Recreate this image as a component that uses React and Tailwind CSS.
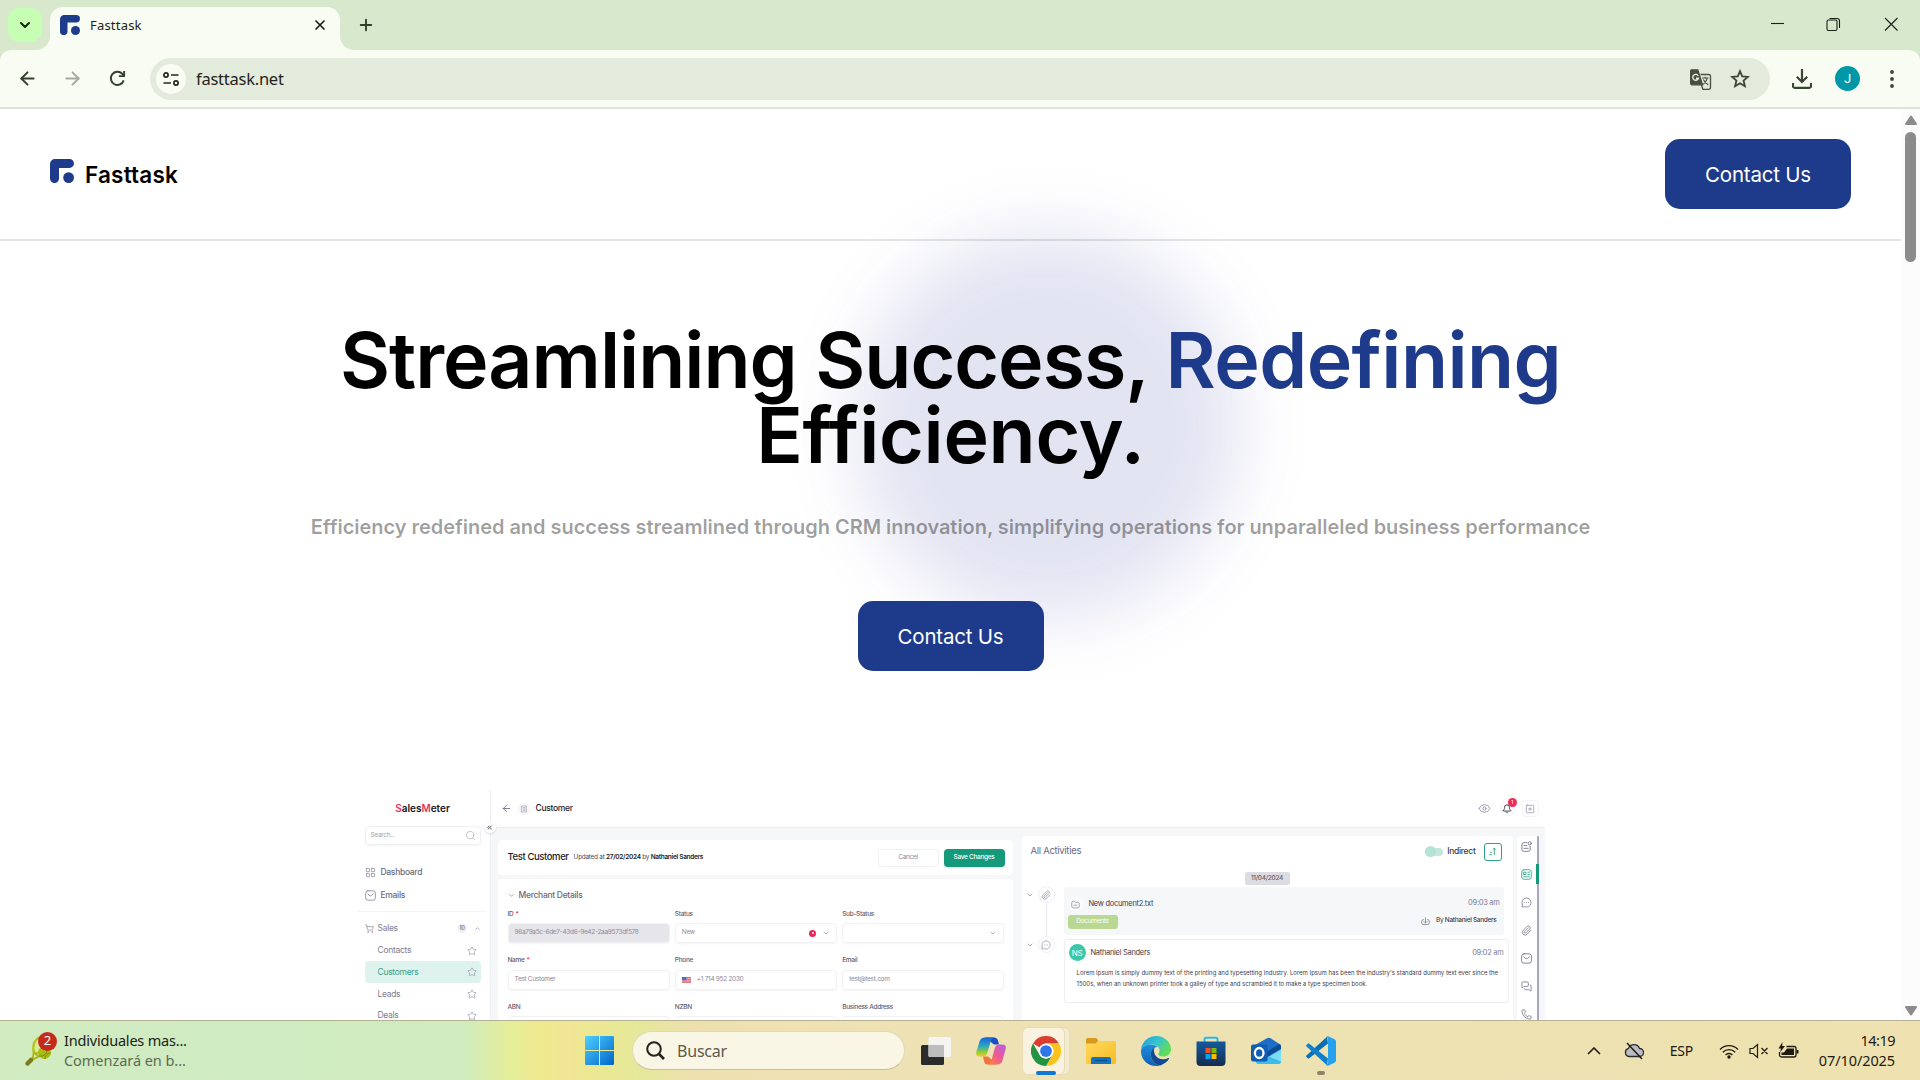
import React from "react";
import {
  ArrowLeft, ArrowRight, ChevronDown, ChevronUp, ChevronsLeft, Eye, Bell, SquarePlus, Star, LayoutGrid,
  ShoppingCart, Search, Paperclip, MessageCircleMore, Phone, MessagesSquare, X, Plus,
} from "lucide-react";

/* ---------- Browser chrome ---------- */

function FasttaskMark({ className }) {
  return (
    <svg viewBox="0 0 24 24" className={className} fill="#1e3a8a">
      <path d="M5 0H19.5A4.4 4.4 0 0 1 19.5 8.9H9V19.6A4.4 4.4 0 0 1 0 19.6V5A5 5 0 0 1 5 0Z" />
      <circle cx="18.6" cy="18.6" r="5.4" />
    </svg>
  );
}

function TabStrip() {
  return (
    <div className="flex h-[50px] shrink-0 bg-[#d8e8cd]">
      <div className="mt-2 ml-2 flex size-[34px] items-center justify-center rounded-xl bg-[#c6ffb4]">
        <ChevronDown className="size-[16px] text-[#16230f]" strokeWidth={3} />
      </div>
      <div className="relative mt-[7px] ml-2 flex h-[43px] w-[290px] items-center rounded-t-[13px] bg-[#f8fcf2] pr-[12px] pl-[10px]">
        <svg viewBox="0 0 14 14" className="absolute bottom-0 -left-[14px] size-[14px]" fill="#f8fcf2"><path d="M14 0V14H0A14 14 0 0 0 14 0Z" /></svg>
        <svg viewBox="0 0 14 14" className="absolute -right-[14px] bottom-0 size-[14px]" fill="#f8fcf2"><path d="M0 0V14H14A14 14 0 0 1 0 0Z" /></svg>
        <FasttaskMark className="mb-[7px] size-5" />
        <span className="mb-[5px] ml-[10px] text-[13px] tracking-[0.2px] text-[#1c1f1a]">Fasttask</span>
        <X className="mb-[7px] ml-auto size-[16px] text-[#1c1f1a]" strokeWidth={2.600} />
      </div>
      <Plus className="mt-[16px] ml-[17px] size-[18px] text-[#2f3d2c]" strokeWidth={2.500} />
      <svg viewBox="0 0 130 16" className="mt-[16px] mr-[22px] ml-auto h-4 w-[130px]" fill="none" stroke="#1a1f17" strokeWidth="1.1">
        <path d="M3 7.5H16" />
        <rect x="59" y="4" width="10" height="10.5" rx="1.5" />
        <path d="M61.500 2.500H69A2.500 2.500 0 0 1 71.500 5V12" />
        <path d="M117 2L129.500 14.500M129.500 2L117 14.500" />
      </svg>
    </div>
  );
}

function TranslateIcon() {
  return (
    <svg viewBox="0 0 22 22" className="size-[22px]" fill="none" stroke="#46513f" strokeWidth="1.300">
      <path d="M10.500 5.500H18.700A1.800 1.800 0 0 1 20.500 7.300V18.500A1.800 1.800 0 0 1 18.700 20.300H13L11.300 15.800" />
      <path d="M2 .8H7.800L12.500 15.800H2A1.400 1.400 0 0 1 .6 14.400V2.200A1.400 1.400 0 0 1 2 .8Z" fill="#46513f" />
      <path d="M8.200 6.900A2.900 2.900 0 1 0 8.400 9.200H6" stroke="#e8efe2" strokeWidth="1.400" />
      <path d="M12 9H18.500M15.200 7.700V9M17.300 9C16.600 12 15 14 12.600 15.600M13.400 10.500C14.300 13 16 14.700 18.300 15.700" strokeWidth="1.100" />
    </svg>
  );
}

function Toolbar() {
  return (
    <div className="flex h-[59px] shrink-0 bg-[#d8e8cd]">
      <div className="flex h-full w-full items-center rounded-t-[11px] border-b-2 border-[#dfe3da] bg-[#f8fcf2]">
        <ArrowLeft className="ml-[17px] size-[21px] text-[#33402f]" strokeWidth={2.200} />
        <ArrowRight className="ml-[24px] size-[21px] text-[#a5aaa1]" strokeWidth={2.200} />
        <svg viewBox="0 0 18 18" className="ml-[26px] size-[17px]" fill="none" stroke="#33402f" strokeWidth="2">
          <path d="M15.600 11A7 7 0 1 1 14 4L16 6.200" />
          <path d="M16 1V6.500H10.500" />
        </svg>
        <div className="ml-[24px] flex h-[42px] w-[1620px] items-center rounded-full bg-[#e3ebdc] pl-[6px]">
          <div className="flex size-[30px] items-center justify-center rounded-full bg-[#f8fcf2]">
            <svg viewBox="0 0 16 16" className="size-4" fill="none" stroke="#20281c" strokeWidth="1.700">
              <circle cx="3" cy="4" r="2.100" /><path d="M8 4H15.500M0.500 12H8" /><circle cx="13" cy="12" r="2.100" />
            </svg>
          </div>
          <span className="mt-[2px] ml-[10px] text-[16.500px] tracking-[-0.25px] text-[#1f241c]">fasttask.net</span>
          <div className="ml-auto pt-[2px]"><TranslateIcon /></div>
          <svg viewBox="0 0 20 20" className="mr-[20px] ml-[18px] size-5" fill="none" stroke="#3b4735" strokeWidth="1.800">
            <path d="M10 2.200L12.200 7.400L17.900 7.900L13.600 11.600L14.900 17.200L10 14.200L5.100 17.200L6.400 11.600L2.100 7.900L7.800 7.400Z" />
          </svg>
        </div>
        <svg viewBox="0 0 20 20" className="ml-[22px] size-5" fill="none" stroke="#3b4735" strokeWidth="2.200">
          <path d="M10 0V12.500M4.800 7.800L10 13L15.200 7.800M1 14V17.200A1.600 1.600 0 0 0 2.600 18.800H17.400A1.600 1.600 0 0 0 19 17.200V14" />
        </svg>
        <div className="ml-[23px] flex size-[25px] items-center justify-center rounded-full bg-[#0097a7] font-['Roboto',sans-serif] text-[13px] text-white">J</div>
        <svg viewBox="0 0 4 18" className="ml-[30px] h-[18px] w-1" fill="#3b4735">
          <circle cx="2" cy="2" r="1.900" /><circle cx="2" cy="9" r="1.900" /><circle cx="2" cy="16" r="1.900" />
        </svg>
      </div>
    </div>
  );
}

/* ---------- CRM preview ---------- */

const Glyph = ({ className, children }) => (
  <svg viewBox="0 0 12 12" className={className} fill="none" stroke="currentColor" strokeWidth="0.900" strokeLinecap="round" strokeLinejoin="round">{children}</svg>
);
const Envelope = ({ className }) => <Glyph className={className}><rect x="0.700" y="0.900" width="10.600" height="10.200" rx="2.500" /><path d="M3 4.300L5 6Q6 6.700 7 6L9 4.300" /></Glyph>;
const FolderOutline = ({ className }) => <Glyph className={className}><path d="M1 3.500A2 2 0 0 1 3 1.500H4.500L6 3.200H9A2 2 0 0 1 11 5.200V8.500A2 2 0 0 1 9 10.500H3A2 2 0 0 1 1 8.500ZM4 7H8" /></Glyph>;
const NoteBadge = ({ className }) => <Glyph className={className}><path d="M6.500 1.800H3A2 2 0 0 0 1 3.800V9.300A2 2 0 0 0 3 11.300H8A2 2 0 0 0 10 9.300V5.500M3.200 5H6.500M3.200 8H7.800" /><circle cx="9.500" cy="2.500" r="1.700" /></Glyph>;
const Newspaper = ({ className }) => <Glyph className={className}><rect x="0.800" y="0.800" width="10.400" height="10.400" rx="2.500" /><path d="M3 3.500H5.500V6H3ZM7.500 3.500H9.200M7.500 6H9.200M3 8.500H9.200" /></Glyph>;
const Lines = ({ className }) => <Glyph className={className}><path d="M2.500 1.500H9.500V10.500H2.500ZM4.500 4H7.500M4.500 6H7.500M4.500 8H7.500" /></Glyph>;
const SaveDown = ({ className }) => <Glyph className={className}><path d="M6 1V8M4 6L6 8L8 6M3.500 3.500H3A2 2 0 0 0 1 5.500V8A2 2 0 0 0 3 10H9A2 2 0 0 0 11 8V5.500A2 2 0 0 0 9 3.500H8.500" /></Glyph>;

function NavRow({ icon: Icon, label, className }) {
  return (
    <div className={`flex items-center font-medium text-[#6d6a80] ${className}`}>
      <Icon className="size-[11px] text-[#84819a]" strokeWidth={1.500} />
      <span className="ml-[5px]">{label}</span>
    </div>
  );
}

function SubRow({ label, className }) {
  return (
    <div className={`flex shrink-0 items-center pr-[4px] pl-[13px] ${className}`}>
      {label}
      <Star className="ml-auto size-[10px] text-[#9a98aa]" strokeWidth={1.700} />
    </div>
  );
}

function CrmSidebar() {
  return (
    <div className="relative flex w-[134px] shrink-0 flex-col border-r border-[#eeeff2] pr-[9px] pl-2 text-[8.500px] text-[#7f7d90]">
      <div className="absolute top-[31px] -right-[6px] flex size-3 items-center justify-center rounded-full bg-white shadow-sm">
        <ChevronsLeft className="size-[7px] text-[#33313f]" strokeWidth={3} />
      </div>
      <div className="flex h-9 shrink-0 items-center justify-center text-[10px] font-semibold tracking-normal text-[#17161c]">
        <span className="text-[#e8325c]">S</span>ales<span className="text-[#e8325c]">M</span>eter
      </div>
      <div className="flex h-[19px] shrink-0 items-center rounded border border-[#f0f0f3] pr-1 pl-[5px] text-[6.500px] text-[#a3a1ae] shadow-[0_1px_2px_rgba(0,0,0,0.05)]">
        Search...<Search className="ml-auto size-[11px] text-[#a3a1ae]" strokeWidth={1.300} />
      </div>
      <NavRow icon={LayoutGrid} label="Dashboard" className="mt-[15px] h-6" />
      <NavRow icon={Envelope} label="Emails" className="h-[23px]" />
      <div className="mt-1 -mr-[5px] -ml-2 h-px shrink-0 bg-[#f4f4f6]" />
      <div className="mt-1 flex h-6 shrink-0 items-center">
        <ShoppingCart className="size-[9px]" strokeWidth={1.700} />
        <span className="ml-1">Sales</span>
        <span className="mr-[7px] ml-auto flex size-[9px] items-center justify-center rounded-full bg-[#eeeef1] text-[5.500px] font-semibold">10</span>
        <ChevronUp className="size-[7px]" />
      </div>
      <SubRow label="Contacts" className="h-[21px]" />
      <SubRow label="Customers" className="h-[22px] rounded bg-[#def3ed] text-[#3f9f86]" />
      <SubRow label="Leads" className="h-[22px]" />
      <SubRow label="Deals" className="h-[21px]" />
    </div>
  );
}

function Field({ label, required, children, className = "" }) {
  return (
    <div className="h-[46.500px]">
      <div className="flex h-[13px] items-center text-[6.500px] font-medium text-[#5f5c70]">
        {label}{required && <span className="ml-[2px] text-[#e8325c]">*</span>}
      </div>
      <div className={`mt-[2px] flex h-5 items-center rounded border border-[#f1f1f4] px-[6px] text-[6.500px] text-[#8b899a] shadow-[0_1px_2px_rgba(0,0,0,0.05)] ${className}`}>
        {children}
      </div>
    </div>
  );
}

function UsFlag() {
  return (
    <svg viewBox="0 0 18 12" className="mr-[6px] h-[6px] w-[9px]">
      <path fill="#f3b3b8" d="M0 0H18V12H0Z" /><path stroke="#dd5561" strokeWidth="1.500" d="M0 1H18M0 4.500H18M0 8H18M0 11.300H18" /><path fill="#4a6fc4" d="M0 0H9V6.500H0Z" />
    </svg>
  );
}

function CustomerForm() {
  return (
    <div className="mt-3 ml-[7px] w-[515px] shrink-0">
      <div className="flex h-[35px] items-center rounded bg-white pr-[8px] pl-[10px] text-[6.500px]">
        <span className="text-[9.500px] font-medium tracking-[-0.4px] text-[#1d1b26]">Test Customer</span>
        <span className="ml-[5px] text-[#4d4b59]">Updated at <b className="font-semibold text-[#1d1b26]">27/02/2024</b> by <b className="font-semibold text-[#1d1b26]">Nathaniel Sanders</b></span>
        <span className="ml-auto flex h-[18px] w-[61px] items-center justify-center rounded border border-[#f1f1f4] text-[#8b899a]">Cancel</span>
        <span className="ml-[5px] flex h-[18px] w-[61px] items-center justify-center rounded bg-[#14997b] font-medium text-white shadow">Save Changes</span>
      </div>
      <div className="mt-1 h-40 rounded bg-white pt-[6px] pr-[8px] pl-[10px]">
        <div className="flex h-5 items-center text-[8.500px] font-medium text-[#6d6a80]">
          <ChevronDown className="mr-[4px] size-[7px]" />Merchant Details
        </div>
        <div className="mt-[3px] grid grid-cols-3 gap-x-[5px]">
          <Field label="ID" required className="bg-[#e6e5ea]">96a79a5c-6de7-43d6-9e42-2aa9573df578</Field>
          <Field label="Status">New
            <span className="mr-[6px] ml-auto flex size-[7px] items-center justify-center rounded-full bg-[#e8265a]"><span className="size-[2px] rounded-full bg-white" /></span>
            <ChevronDown className="size-[8px]" />
          </Field>
          <Field label="Sub-Status"><ChevronDown className="ml-auto size-[8px]" /></Field>
          <Field label="Name" required>Test Customer</Field>
          <Field label="Phone"><UsFlag />+1 714 952 2030</Field>
          <Field label="Email">test@test.com</Field>
          <Field label="ABN" /><Field label="NZBN" /><Field label="Business Address" />
        </div>
      </div>
    </div>
  );
}

function TimelineNode({ icon: Icon }) {
  return (
    <div className="flex h-[17px] items-center">
      <ChevronDown className="size-[8px] text-[#84819a]" />
      <div className="ml-[4px] flex size-[17px] items-center justify-center rounded-full border border-[#f0f0f4]">
        <Icon className="size-[10px] text-[#84819a]" strokeWidth={1.500} />
      </div>
    </div>
  );
}

function Activities() {
  return (
    <div className="mt-2 ml-[9px] h-[200px] w-[491px] shrink-0 rounded bg-white text-[7.500px] text-[#3d3b49]">
      <div className="flex h-[31px] items-center pr-[11px] pl-[9px]">
        <span className="text-[9.500px] text-[#6d6a80]">All Activities</span>
        <span className="ml-auto flex h-[8px] w-[18px] items-center rounded-full bg-[#c3e9de]"><span className="size-[11px] shrink-0 rounded-full bg-[#b4e3d6]" /></span>
        <span className="ml-1 text-[8.500px] font-medium">Indirect</span>
        <span className="ml-[8px] flex size-[18px] items-center justify-center rounded-[3px] border border-[#2ba286]">
          <svg viewBox="0 0 10 10" className="size-[9px]" stroke="#2ba286" fill="none"><path d="M7 9V1.500M5.200 3L7 1.200L8.800 3M1.500 8.500H4.500M2.500 6H4.500" /></svg>
        </span>
      </div>
      <div className="mx-auto mt-[5px] flex h-[13px] w-[45px] items-center justify-center rounded-[2px] bg-[#dddce3] text-[6.500px] font-medium text-[#5f5c70]">11/04/2024</div>
      <div className="mt-[2px] flex">
        <div className="-mt-[1px] w-[42px] shrink-0 pl-[4px]">
          <TimelineNode icon={Paperclip} />
          <div className="ml-[20px] h-[33px] w-px bg-[#ecebf0]" />
          <TimelineNode icon={MessageCircleMore} />
        </div>
        <div>
          <div className="flex h-12 w-[440px] justify-between rounded bg-[#f6f7f9] pr-1 pl-1">
            <div>
              <div className="mt-[7px] flex h-5 items-center">
                <span className="flex size-4 items-center justify-center rounded-full bg-[#fafbfc]"><FolderOutline className="size-[9px] text-[#84819a]" /></span>
                <span className="ml-[5px]">New document2.txt</span>
              </div>
              <div className="mt-[1px] flex h-[14px] w-[50px] items-center justify-center rounded-[3px] bg-[#b9d892] text-[6.500px] text-white">Documents</div>
            </div>
            <div className="flex flex-col items-end">
              <span className="mt-[6px] flex h-5 items-center text-[#7f7d90]">09:03 am</span>
              <span className="flex h-4 items-center text-[6.500px]"><SaveDown className="mr-[6px] size-[9px] text-[#6d6a80]" /><span className="pr-[3px]">By <b className="font-medium">Nathaniel Sanders</b></span></span>
            </div>
          </div>
          <div className="mt-1 h-[64px] w-[445px] rounded-[3px] border border-[#eeeef2] pr-1 pl-1">
            <div className="mt-1 flex h-[17px] items-center">
              <span className="flex size-[17px] items-center justify-center rounded-full bg-[#3cc7a7] text-[8px] text-white">NS</span>
              <span className="ml-[5px]">Nathaniel Sanders</span>
              <span className="ml-auto text-[#7f7d90]">09:02 am</span>
            </div>
            <p className="mt-[6px] pl-2 text-[6px] leading-[11px] tracking-normal whitespace-nowrap text-[#3d3b49]">
              Lorem Ipsum is simply dummy text of the printing and typesetting industry. Lorem Ipsum has been the industry's standard dummy text ever since the<br />
              1500s, when an unknown printer took a galley of type and scrambled it to make a type specimen book.
            </p>
          </div>
        </div>
      </div>
    </div>
  );
}

function IconRail() {
  const icons = [NoteBadge, Newspaper, MessageCircleMore, Paperclip, Envelope, MessagesSquare, Phone];
  return (
    <div className="mt-2 ml-[4px] flex h-[200px]">
      <div className="flex w-[20px] flex-col items-center gap-[17px] rounded-l bg-white pt-[5px]">
        {icons.map((Icon, i) => (
          <div key={i} className="relative">
            <Icon className={i === 1 ? "size-[11px] text-[#2ba286]" : "size-[11px] text-[#6d6a80]"} strokeWidth={1.600} />
            {i === 1 && <span className="absolute -top-[5px] -right-[7px] h-5 w-[3px] bg-[#14997b]" />}
          </div>
        ))}
      </div>
      <div className="w-[2px] rounded-t bg-[#aaa6bd]" />
    </div>
  );
}

function CrmPreview() {
  return (
    <div className="mx-auto mt-[119px] flex h-[240px] w-[1188px] bg-white font-['Inter',sans-serif] tracking-[-0.3px] whitespace-nowrap">
      <CrmSidebar />
      <div className="min-w-0 flex-1 bg-[#f6f7f9]">
        <div className="flex h-[38px] items-center border-b border-[#eeeff2] bg-white pr-[6px] pl-[10px]">
          <ArrowLeft className="size-[11px] text-[#5f5c70]" strokeWidth={1.700} />
          <span className="ml-[6px] flex size-[12px] items-center justify-center rounded-full border border-[#f0f0f4]"><Lines className="size-[8px] text-[#84819a]" /></span>
          <span className="ml-[6px] text-[8.500px] font-medium text-[#1d1b26]">Customer</span>
          <Eye className="ml-auto size-[13px] text-[#84819a]" strokeWidth={1.400} />
          <span className="relative ml-[9px] flex size-[15px] items-center justify-center rounded-full border border-[#f0f0f4]">
            <Bell className="size-[10px] text-[#1d1b26]" />
            <span className="absolute -top-[4px] -right-[3px] flex size-[9px] items-center justify-center rounded-full bg-[#ee2a55] text-[5px] text-white">1</span>
          </span>
          <span className="ml-[7px] flex size-[17px] items-center justify-center rounded border border-[#f3f3f6]"><SquarePlus className="size-[10px] text-[#84819a]" strokeWidth={1.500} /></span>
        </div>
        <div className="flex items-start">
          <CustomerForm />
          <Activities />
          <IconRail />
        </div>
      </div>
    </div>
  );
}

/* ---------- Landing page ---------- */

function ContactButton() {
  return (
    <button className="flex h-[70px] w-[186px] shrink-0 items-center justify-center rounded-[15px] bg-[#1e3a8a] pt-[2px] text-[20.500px] tracking-[-0.2px] text-white">
      Contact Us
    </button>
  );
}

function LandingPage() {
  return (
    <div className="relative h-full w-[1901px] overflow-hidden font-['Inter',sans-serif]">
      <div className="absolute top-[122px] left-[853px] size-[388px] rounded-full bg-[#28329a]/13 blur-[33px]" />
      <header className="flex h-[132px] items-center justify-between border-b-2 border-[#e5e5e5] pr-[50px] pl-[50px]">
        <div className="flex items-center">
          <FasttaskMark className="mb-[6px] size-6" />
          <span className="mt-[2px] ml-[11px] text-[22.500px] font-semibold tracking-[0.2px] text-black">Fasttask</span>
        </div>
        <ContactButton />
      </header>
      <main className="relative flex flex-col items-center">
        <h1 className="mt-[82px] text-center text-[77px] leading-[75px] font-semibold tracking-[-1px] whitespace-nowrap text-black">
          Streamlining Success, <span className="tracking-[-0.600px] text-[#1e3a8a]">Redefining</span>
          <br /><span className="tracking-[-0.300px]">Efficiency.</span>
        </h1>
        <p className="mt-[39px] text-[20px] leading-[30px] font-semibold tracking-[-0.04px] whitespace-nowrap text-black/38">
          Efficiency redefined and success streamlined through CRM innovation, simplifying operations for unparalleled business performance
        </p>
        <div className="mt-[59px]"><ContactButton /></div>
        <CrmPreview />
      </main>
    </div>
  );
}

function Scrollbar() {
  return (
    <div className="flex w-[19px] flex-col items-center bg-[#fcfcfc] pt-[6px] pb-[4px]">
      <svg viewBox="0 0 12 10" className="h-[10px] w-3" fill="#8b8b8b" stroke="#8b8b8b" strokeWidth="2" strokeLinejoin="round"><path d="M6 1.500L11 9H1Z" /></svg>
      <div className="mt-[7px] h-[130px] w-[11px] rounded-full bg-[#8b8b8b]" />
      <svg viewBox="0 0 12 10" className="mt-auto h-[10px] w-3" fill="#8b8b8b" stroke="#8b8b8b" strokeWidth="2" strokeLinejoin="round"><path d="M6 8.500L11 1H1Z" /></svg>
    </div>
  );
}

/* ---------- Taskbar ---------- */

function TennisWidget() {
  return (
    <div className="relative w-8">
      <svg viewBox="0 0 32 36" className="h-9 w-8">
        <path d="M10 21C8 13 10 7 16 4C22 2 25 8 22 14C20 18 15 20 10 21Z" fill="#dbe9a0" stroke="#b3c41d" strokeWidth="2.200" />
        <path d="M9.500 17L16 24L7 28.500Z" fill="#a8b80f" /><path d="M10.500 21L13 23.500L9.500 25Z" fill="#d3ebbc" />
        <path d="M3.500 30.500L7 27" stroke="#7b7a1c" strokeWidth="4.500" strokeLinecap="round" />
        <circle cx="20.500" cy="19.500" r="6.500" fill="#a9bd12" /><path d="M15 23C20 24 24 20 23 14M21 26C21 22 24 20 26.500 20" stroke="#758510" fill="none" />
      </svg>
      <span className="absolute -top-[1px] left-[14px] flex size-[19px] items-center justify-center rounded-full bg-[#c42b1c] text-[13px] text-white">2</span>
    </div>
  );
}

const WindowsLogo = () => (
  <svg viewBox="0 0 29 29" className="size-[29px]">
    <defs><linearGradient id="win" x1="0" y1="0" x2="1" y2="1"><stop stopColor="#4fd0ff" /><stop offset="1" stopColor="#0065c8" /></linearGradient></defs>
    <path fill="url(#win)" d="M1.200 0H14V14H0V1.200A1.200 1.200 0 0 1 1.200 0ZM15 0H27.800A1.200 1.200 0 0 1 29 1.200V14H15ZM0 15H14V29H1.200A1.200 1.200 0 0 1 0 27.800ZM15 15H29V27.800A1.200 1.200 0 0 1 27.800 29H15Z" />
  </svg>
);

const TaskView = () => (
  <svg viewBox="0 0 30 30" className="size-[30px]">
    <rect x="0" y="9" width="23" height="20" rx="1.500" fill="#2b2b2b" />
    <rect x="7.500" y="1" width="22.500" height="20" rx="1.500" fill="#f4f4f4" fillOpacity="0.95" />
    <path d="M7.500 9H23V21H9A1.500 1.500 0 0 1 7.500 19.500Z" fill="#bdbdbd" />
  </svg>
);

const Copilot = () => (
  <svg viewBox="0 0 30 30" className="size-[30px]">
    <defs>
      <linearGradient id="cpA" x1="0" y1="0" x2="0" y2="1"><stop stopColor="#1c62d8" /><stop offset=".45" stopColor="#2aa7c4" /><stop offset=".75" stopColor="#8ccb3c" /><stop offset="1" stopColor="#f6c823" /></linearGradient>
      <linearGradient id="cpB" x1="1" y1="0" x2="0" y2="1"><stop stopColor="#b45ff0" /><stop offset=".5" stopColor="#ec5a92" /><stop offset="1" stopColor="#fb8a3c" /></linearGradient>
    </defs>
    <path fill="#1a4fc4" d="M9 1.500H18.500Q21 1.500 21.800 4L23 8.500H18Z" />
    <path fill="url(#cpA)" d="M9 1.500H18Q15.500 2 14.500 6L11.300 17Q10.200 20.500 7 20.500H4Q-.8 20.500 .3 16L3.700 5Q5 1.500 9 1.500Z" />
    <path fill="#f2743c" d="M21 28.500H11.500Q9 28.500 8.200 26L7 20.500H12Z" />
    <path fill="url(#cpB)" d="M21 28.500H12Q14.500 28 15.500 24L18.700 12.500Q19.800 8.500 23 8.500H26Q30.800 8.500 29.700 13L26.300 25Q25 28.500 21 28.500Z" />
  </svg>
);

const ChromeIcon = () => (
  <svg viewBox="0 0 48 48" className="relative size-[30px]">
    <path fill="#db3e31" d="M3.200 12A24 24 0 0 1 44.800 12H24L13.600 18Z" />
    <path fill="#fcc31e" d="M44.800 12A24 24 0 0 1 24 48L34.400 30A12 12 0 0 0 34.400 18L24 12Z" />
    <path fill="#229342" d="M3.200 12A24 24 0 0 0 24 48L34.400 30A12 12 0 0 1 13.600 30Z" />
    <circle cx="24" cy="24" r="12" fill="#fff" /><circle cx="24" cy="24" r="9.400" fill="#2e77ea" />
  </svg>
);

const FolderIcon = () => (
  <svg viewBox="0 0 30 30" className="size-[30px]">
    <defs><linearGradient id="fld" x1="0" y1="0" x2="1" y2="1"><stop stopColor="#ffd95e" /><stop offset="1" stopColor="#f7bb23" /></linearGradient></defs>
    <path fill="#d99a1c" d="M0 3.500A1.500 1.500 0 0 1 1.500 2H9.500Q10.500 2 11.200 3L12.500 5V10H0Z" />
    <path fill="url(#fld)" d="M0 7.500H9.500L12 5H28.500A1.500 1.500 0 0 1 30 6.500V26.500A1.500 1.500 0 0 1 28.500 28H1.500A1.500 1.500 0 0 1 0 26.500Z" />
    <path fill="#1373bd" d="M5 28V23A2 2 0 0 1 7 21H23A2 2 0 0 1 25 23V28Z" /><path d="M9 24.500H21" stroke="#0b4f8a" strokeWidth="1.300" />
  </svg>
);

const EdgeIcon = () => (
  <svg viewBox="0 0 30 30" className="size-[30px]">
    <defs>
      <linearGradient id="edA" x1="0" y1="0" x2="1" y2=".5"><stop stopColor="#1f9fe0" /><stop offset=".55" stopColor="#35c4cf" /><stop offset="1" stopColor="#62dd55" /></linearGradient>
      <linearGradient id="edB" x1="0" y1="0" x2="0" y2="1"><stop stopColor="#1c8fe0" /><stop offset="1" stopColor="#0f5fb5" /></linearGradient>
    </defs>
    <path fill="url(#edA)" d="M0 13.500C1 5.500 7.500 0 15 0C24 0 30 6.500 30 13C30 18 26.500 20.500 22.500 20.500C19 20.500 17 19 17.300 17.800C17.600 17 18.500 16.300 18.500 14.500C18.500 11 15 8.500 10.500 8.500C5.500 8.500 1.500 11 0 13.500Z" />
    <path fill="url(#edB)" d="M0 14.500C.8 11 5 8.500 10 8.500C12.500 8.500 15 9.500 16.300 11C13.500 11 9.800 14 9.800 18.500C9.800 24 14 29 19 29.500C17.800 29.900 16.500 30 15 30C6.500 30-.5 23 0 14.500Z" />
    <path fill="#104a94" d="M13.500 11.600C10.800 13.500 9.800 16 9.800 18.500C9.800 24 14 29.200 19.300 29.400C23.500 28 26.500 25.500 28 22.800C28.400 22 27.800 21.700 27.200 22C25.800 22.800 24.300 23.300 22 23.300C15.500 23.300 11.500 17.500 13.500 11.600Z" />
  </svg>
);

const StoreIcon = () => (
  <svg viewBox="0 0 30 30" className="size-[30px]">
    <defs><linearGradient id="st" x1="0" y1="0" x2="0" y2="1"><stop stopColor="#145a9c" /><stop offset="1" stopColor="#152c52" /></linearGradient></defs>
    <path d="M8.500 6V3A1.500 1.500 0 0 1 10 1.700H20A1.500 1.500 0 0 1 21.500 3V6" fill="none" stroke="#2bb7ea" strokeWidth="2" />
    <path fill="url(#st)" d="M.5 5.500H29.500V26A4 4 0 0 1 25.500 30H4.500A4 4 0 0 1 .5 26Z" />
    <path fill="#f25022" d="M9.500 12H14.500V17H9.500Z" /><path fill="#7fba00" d="M15.500 12H20.500V17H15.500Z" /><path fill="#00a4ef" d="M9.500 18H14.500V23H9.500Z" /><path fill="#ffb900" d="M15.500 18H20.500V23H15.500Z" />
  </svg>
);

const OutlookIcon = () => (
  <svg viewBox="0 0 30 30" className="size-[30px]">
    <path fill="#1d6fc6" d="M4 9L16.500 2Q18 1.500 19.500 2.300L30 9L18 19L4 20Z" />
    <path fill="#38bdec" d="M30 13V25.500A2.500 2.500 0 0 1 27.500 28H7.500Q5 28 4.500 25V22H15Z" /><path fill="#7adcf5" d="M30 14V25.500L18 20.500Z" />
    <path fill="#0d4a98" d="M13 17.500L28.500 8L30 9.500V13L15 22H13Z" />
    <rect x="0" y="8.500" width="16.500" height="17" rx="2" fill="#0f5db3" />
    <ellipse cx="8.200" cy="17" rx="4.300" ry="5" fill="none" stroke="#fff" strokeWidth="2.300" />
  </svg>
);

const VsCodeIcon = () => (
  <svg viewBox="0 0 30 30" className="size-[30px]">
    <path fill="#0b6fb8" d="M22 7.500L3.300 22.300Q2.500 23 1.800 22.300L.5 21Q-.3 20.200 .5 19.500L21 .8Z" />
    <path fill="#1180cc" d="M22 22.500L3.300 7.700Q2.500 7 1.800 7.700L.5 9Q-.3 9.800 .5 10.500L21 29.200Z" />
    <path fill="#27a0ee" d="M22 .3L28.500 3.200Q30 4 30 5.500V24.500Q30 26 28.500 26.800L22 29.700Q20.800 29.800 20.500 29L22 27V3L20.500 1Q21 .2 22 .3Z" />
  </svg>
);

function Tray() {
  return (
    <div className="mr-[25px] ml-auto flex items-center text-[14.500px] text-[#1d1b12]">
      <svg viewBox="0 0 14 8" className="h-2 w-[14px]" fill="none" stroke="currentColor" strokeWidth="1.600"><path d="M1 7L7 1L13 7" /></svg>
      <svg viewBox="0 0 20 18" className="ml-[23px] h-[18px] w-5">
        <path d="M5 14.500A4.200 4.200 0 0 1 4.500 6.300A6 6 0 0 1 15.600 6.500A4 4 0 0 1 15.500 14.500Z" fill="#b9bcc4" stroke="#2b2b2b" strokeWidth="1.300" />
        <path d="M3 1L18 17" stroke="#1d1b12" strokeWidth="1.500" />
      </svg>
      <span className="ml-[26px] w-[23px] text-[14px] tracking-[-0.3px]">ESP</span>
      <svg viewBox="0 0 20 16" className="ml-[26px] h-4 w-5" fill="none" stroke="currentColor" strokeWidth="1.400">
        <path d="M1 6.500A12.500 12.500 0 0 1 19 6.500M3.800 9.300A8.500 8.500 0 0 1 16.200 9.300M6.600 12A4.700 4.700 0 0 1 13.400 12" /><circle cx="10" cy="14" r="1.700" fill="currentColor" stroke="none" />
      </svg>
      <svg viewBox="0 0 20 16" className="ml-[10px] h-4 w-5" fill="none" stroke="currentColor" strokeWidth="1.200"><path d="M1 5.500H4L8.500 1.500V14.500L4 10.500H1ZM12.500 5L18.500 11M18.500 5L12.500 11" /></svg>
      <svg viewBox="0 0 21 17" className="ml-[9px] h-[17px] w-[21px]" fill="none" stroke="currentColor" strokeWidth="1.300">
        <path d="M8.500 4.500H16A2 2 0 0 1 18 6.500V13A2 2 0 0 1 16 15H3.500A2 2 0 0 1 1.500 13V10" />
        <path d="M9 6.500H16V13H3.500V10.500H6Z" fill="currentColor" stroke="none" /><path d="M4.500 0L.5 6.500H3L2 10.500L7 4H4.200Z" fill="currentColor" stroke="none" /><path d="M19.500 8V11.500" strokeWidth="2" />
      </svg>
      <div className="mb-[2px] ml-[20px] flex flex-col items-end leading-5">
        <span className="tracking-[-0.5px]">14:19</span>
        <span className="tracking-[-0.1px]">07/10/2025</span>
      </div>
    </div>
  );
}

function Taskbar() {
  return (
    <div className="flex h-[60px] shrink-0 items-center border-t border-[#b5b394] bg-[linear-gradient(90deg,#d2ecc0_0px,#cfebc2_250px,#d0ebbd_465px,#e4ee9a_508px,#efe98f_540px,#f1e694_565px,#ebe892_600px,#e5e89b_640px,#ede0ae_690px,#efe1b4_800px,#ede2b2_1300px,#efe1b0_1920px)]">
      <div className="flex w-[585px] items-center pl-6">
        <TennisWidget />
        <div className="mb-[2px] ml-2 text-[14.500px] leading-5">
          <div className="tracking-[-0.2px] text-[#1a2115]">Individuales mas...</div>
          <div className="tracking-[-0.05px] text-[#5b6b52]">Comenzará en b...</div>
        </div>
      </div>
      <WindowsLogo />
      <div className="ml-[18px] flex h-[39px] w-[273px] items-center rounded-full border border-b-[#c9bf94] border-[#e2d9b4] bg-[#faf6e6] pl-[13px]">
        <svg viewBox="0 0 19 19" className="size-[19px]" fill="none" stroke="#25231c" strokeWidth="2"><circle cx="8" cy="8" r="6.800" /><path d="M13 13L18 18" strokeWidth="2.600" /></svg>
        <span className="ml-[12px] text-[16px] tracking-[-0.2px] text-[#5d594d]">Buscar</span>
      </div>
      <div className="ml-4 flex items-center gap-[25px]">
        <TaskView />
        <Copilot />
        <div className="relative">
          <div className="absolute -top-[9px] -left-[9px] h-12 w-12 rounded-md border border-[#e6dcba] bg-[#f4ecd0]" />
          <div className="absolute -top-[9px] -left-[9px] h-12 w-[43px] rounded-md border border-[#e6dcba] bg-[#f8f2df]" />
          <ChromeIcon />
          <div className="absolute top-[35px] left-[5px] h-1 w-5 rounded-full bg-[#0f78d4]" />
        </div>
        <FolderIcon />
        <EdgeIcon />
        <StoreIcon />
        <OutlookIcon />
        <div className="relative">
          <VsCodeIcon />
          <div className="absolute top-[35px] left-[11px] h-1 w-2 rounded-full bg-[#8b8467]" />
        </div>
      </div>
      <Tray />
    </div>
  );
}

export default function App() {
  return (
    <div className="flex h-[1080px] w-[1920px] flex-col overflow-hidden bg-white font-['Noto_Sans','Open_Sans',sans-serif]">
      <TabStrip />
      <Toolbar />
      <div className="flex min-h-0 flex-1">
        <LandingPage />
        <Scrollbar />
      </div>
      <Taskbar />
    </div>
  );
}
